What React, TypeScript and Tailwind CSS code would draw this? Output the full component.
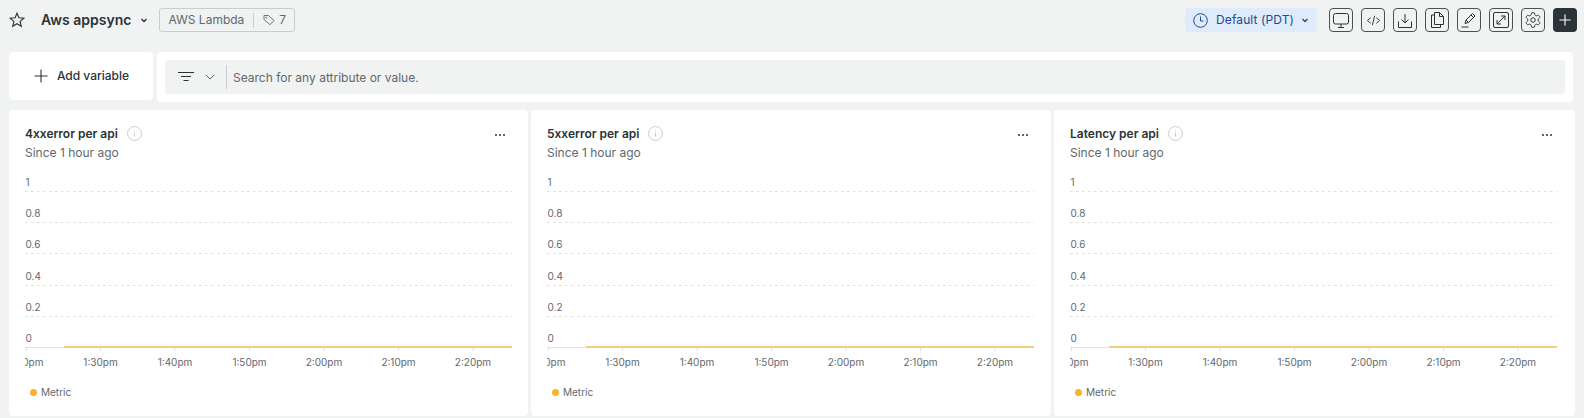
import React from "react";

const Ico = ({ children, size = 16, className = "" }: { children: React.ReactNode; size?: number; className?: string }) => (
  <svg width={size} height={size} viewBox="0 0 16 16" fill="none" stroke="currentColor" strokeWidth={1} className={className}>
    {children}
  </svg>
);

const yLabels = ["1", "0.8", "0.6", "0.4", "0.2", "0"];
const xLabels = ["1:30pm", "1:40pm", "1:50pm", "2:00pm", "2:10pm", "2:20pm"];

function Chart() {
  return (
    <svg width="488" height="196" viewBox="0 0 488 196" className="block" style={{ fontFamily: "Inter, sans-serif" }}>
      {yLabels.map((l, i) => {
        const y = 17 + i * 31.2;
        return (
          <g key={l}>
            {i < 5 && <line x1="0" x2="487" y1={Math.round(y) + 0.5} y2={Math.round(y) + 0.5} stroke="#dcdfe0" strokeDasharray="2.5 3.5" />}
            <text x="0.5" y={y - 5} fontSize="10" fill="#5f686e">{l}</text>
          </g>
        );
      })}
      <line x1="0" x2="487" y1="173.5" y2="173.5" stroke="#e1e3e4" />
      <line x1="39" x2="487" y1="173" y2="173" stroke="#f3cf7f" strokeWidth="2" />
      {[1.5, 75.5, 150, 224.5, 299, 373.5, 448].map((x) => (
        <line key={x} x1={x} x2={x} y1="174" y2="177" stroke="#dfe1e2" />
      ))}
      <text x="18.5" y="192" fontSize="10" fill="#5f686e" textAnchor="end">0pm</text>
      {xLabels.map((l, i) => (
        <text key={l} x={75.5 + i * 74.5} y="192" fontSize="10" fill="#5f686e" textAnchor="middle">{l}</text>
      ))}
    </svg>
  );
}

function Card({ title }: { title: string }) {
  return (
    <div className="h-[306px] min-w-0 rounded bg-white pl-4 pr-4 pt-[14px]">
      <div className="flex h-[19px] items-center justify-between">
        <div className="flex items-center gap-[9px]">
          <span className="text-xs leading-[19px] font-semibold text-[#293338]">{title}</span>
          <svg width="15" height="15" viewBox="0 0 15 15" fill="none" className="text-[#c9cdcf]">
            <circle cx="7.5" cy="7.5" r="7" stroke="currentColor" />
            <path d="M7.5 6.5v4M7.5 4.2v1" stroke="currentColor" />
          </svg>
        </div>
        <div className="mr-[7px] mt-[2px] flex gap-[2px]">
          <span className="size-[2px] rounded-full bg-[#293338]" />
          <span className="size-[2px] rounded-full bg-[#293338]" />
          <span className="size-[2px] rounded-full bg-[#293338]" />
        </div>
      </div>
      <div className="mt-[1px] text-xs leading-[17px] text-[#5f686e]">Since 1 hour ago</div>
      <div className="mt-[13px]">
        <Chart />
      </div>
      <div className="mt-[15px] flex items-center gap-1 pl-[5px]">
        <span className="size-[7px] rounded-full bg-[#fbb32b]" />
        <span className="text-[10px] leading-[14px] text-[#5f686e]">Metric</span>
      </div>
    </div>
  );
}

function IconBtn({ children, dark }: { children: React.ReactNode; dark?: boolean }) {
  return (
    <button
      className={
        dark
          ? "flex size-6 items-center justify-center rounded bg-[#293338] text-white"
          : "flex size-6 items-center justify-center rounded border border-[#4a5256] text-[#293338]"
      }
    >
      {children}
    </button>
  );
}

export default function App() {
  return (
    <div
      className="h-[418px] w-[1584px] overflow-hidden bg-[#f1f2f2] pl-[9px] pr-[9px] pt-2"
      style={{ fontFamily: "Inter, sans-serif" }}
    >
      <header className="flex h-6 items-center">
        <svg width="16" height="16" viewBox="0 0 16 16" fill="none" stroke="#293338" strokeWidth="1.1">
          <path d="M8 1.2l1.9 4.6 5 .4-3.8 3.2 1.2 4.9L8 11.7l-4.3 2.6 1.2-4.9L1.1 6.2l5-.4z" />
        </svg>
        <span className="ml-4 text-sm font-semibold text-[#293338]">Aws appsync</span>
        <svg width="10" height="10" viewBox="0 0 10 10" fill="none" stroke="#293338" strokeWidth="1.5" className="ml-2">
          <path d="M2.5 4L5 6.5 7.5 4" />
        </svg>
        <div className="ml-[10px] flex h-6 items-center rounded-[3px] border border-[#c9cdcf] pl-2 pr-2">
          <span className="text-xs text-[#5f686e]">AWS Lambda</span>
          <span className="mx-[9px] h-[15px] w-px bg-[#c9cdcf]" />
          <svg width="12" height="12" viewBox="0 0 12 12" fill="none" stroke="#5f686e" strokeWidth="0.9">
            <path d="M1 1.5h4.5L11 6.5 7 10.7 1 5.5z" />
            <circle cx="3.3" cy="3.7" r="0.5" />
          </svg>
          <span className="ml-1 text-xs text-[#5f686e]">7</span>
        </div>
        <div className="ml-auto flex h-6 items-center rounded bg-[#dfebfb] pl-2 pr-[7px] text-[#1d4a8c]">
          <svg width="15" height="15" viewBox="0 0 15 15" fill="none" stroke="currentColor" strokeWidth="1">
            <circle cx="7.5" cy="7.5" r="6.8" />
            <path d="M7.5 3.5V8h3" />
          </svg>
          <span className="ml-2 text-xs tracking-[0.1px]">Default (PDT)</span>
          <svg width="10" height="10" viewBox="0 0 10 10" fill="none" stroke="currentColor" strokeWidth="1.3" className="ml-[6px]">
            <path d="M2.5 4L5 6.5 7.5 4" />
          </svg>
        </div>
        <div className="ml-3 mr-[-2px] flex gap-2">
          <IconBtn>
            <svg width="16" height="15" viewBox="0 0 16 15" fill="none" stroke="currentColor">
              <rect x="0.5" y="0.5" width="15" height="10.5" rx="2" />
              <path d="M8 11v3.500M5 14.500h6" />
            </svg>
          </IconBtn>
          <IconBtn>
            <Ico size={15}><path d="M5 5L1.500 8 5 11M11 5l3.500 3L11 11M9.200 3l-2.400 10" /></Ico>
          </IconBtn>
          <IconBtn>
            <svg width="14" height="15" viewBox="0 0 14 15" fill="none" stroke="currentColor">
              <path d="M7 1v9M3.500 6.500L7 10l3.500-3.500M.5 8.500v6h13v-6" />
            </svg>
          </IconBtn>
          <IconBtn>
            <svg width="13" height="16" viewBox="0 0 13 16" fill="none" stroke="currentColor">
              <path d="M3.500 .5h5l4 4V12.500h-9zM8.500 .5v4h4M3.500 3H.5v12.500h9V12.500" />
            </svg>
          </IconBtn>
          <IconBtn>
            <svg width="16" height="16" viewBox="0 0 16 16" fill="none" stroke="currentColor">
              <path d="M4 11.500L5 8l6.500-6.500L14 4l-6.500 6.500zM10 3l2.500 2.500M5 8l2.500 2.500M.5 15h7" />
            </svg>
          </IconBtn>
          <IconBtn>
            <svg width="16" height="16" viewBox="0 0 16 16" fill="none" stroke="currentColor">
              <rect x="0.5" y="0.5" width="15" height="15" rx="1.5" />
              <path d="M4 12l8-8M8 4h4v4M4 8v4h4" />
            </svg>
          </IconBtn>
          <IconBtn>
            <svg width="18" height="18" viewBox="0 0 24 24" fill="none" stroke="currentColor" strokeWidth="1.3">
              <path d="M12.220 2h-.44a2 2 0 0 0-2 2v.18a2 2 0 0 1-1 1.730l-.43.250a2 2 0 0 1-2 0l-.15-.08a2 2 0 0 0-2.730.730l-.220.380a2 2 0 0 0 .730 2.730l.150.100a2 2 0 0 1 1 1.720v.510a2 2 0 0 1-1 1.740l-.150.090a2 2 0 0 0-.730 2.730l.220.380a2 2 0 0 0 2.730.730l.150-.08a2 2 0 0 1 2 0l.430.250a2 2 0 0 1 1 1.730V20a2 2 0 0 0 2 2h.440a2 2 0 0 0 2-2v-.18a2 2 0 0 1 1-1.730l.430-.250a2 2 0 0 1 2 0l.150.080a2 2 0 0 0 2.730-.730l.220-.390a2 2 0 0 0-.730-2.730l-.150-.080a2 2 0 0 1-1-1.740v-.500a2 2 0 0 1 1-1.740l.150-.090a2 2 0 0 0 .730-2.730l-.220-.380a2 2 0 0 0-2.730-.730l-.150.080a2 2 0 0 1-2 0l-.430-.250a2 2 0 0 1-1-1.730V4a2 2 0 0 0-2-2z" />
              <circle cx="12" cy="12" r="3" />
            </svg>
          </IconBtn>
          <IconBtn dark>
            <Ico size={16}><path d="M8 2.500v11M2.500 8h11" strokeWidth="1.1" /></Ico>
          </IconBtn>
        </div>
      </header>

      <div className="mt-5 flex items-start gap-1 pr-[2px]">
        <button className="flex h-12 w-[144px] items-center justify-center rounded bg-white text-[#293338]">
          <Ico size={16}><path d="M8 1.500v13M1.500 8h13" strokeWidth="1.1" /></Ico>
          <span className="ml-2 text-xs font-medium">Add variable</span>
        </button>
        <div className="flex h-[50px] min-w-0 flex-1 rounded bg-white p-2">
          <div className="flex h-[34px] flex-1 items-center rounded-[2px] bg-[#f1f2f2]">
            <svg width="16" height="10" viewBox="0 0 16 10" fill="none" stroke="#293338" className="ml-[13px]">
              <path d="M0 .5h16M3 4.500h10M5.500 8.500h5" />
            </svg>
            <svg width="10" height="10" viewBox="0 0 10 10" fill="none" stroke="#5f686e" className="ml-[11px]">
              <path d="M1 3l4 4 4-4" />
            </svg>
            <span className="ml-[11px] h-6 w-px bg-[#c9cdcf]" />
            <span className="ml-[6px] pt-[2px] text-xs text-[#5f686e]">Search for any attribute or value.</span>
          </div>
        </div>
      </div>

      <div className="mt-2 grid grid-cols-[519px_520px_521px] gap-[3px]">
        <Card title="4xxerror per api" />
        <Card title="5xxerror per api" />
        <Card title="Latency per api" />
      </div>
    </div>
  );
}
